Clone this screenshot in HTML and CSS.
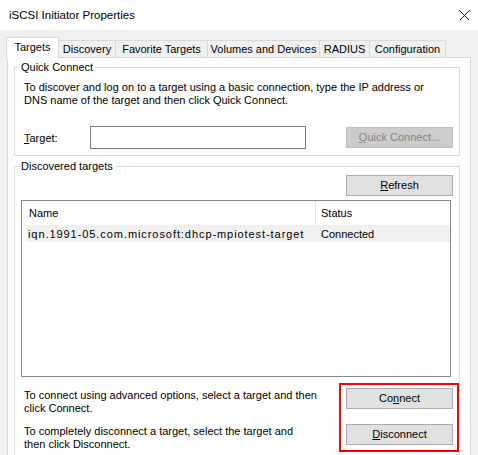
FILE: index.html
```html
<!DOCTYPE html>
<html lang="en">
<head>
<meta charset="utf-8">
<title>iSCSI Initiator Properties</title>
<link rel="stylesheet" href="styles.css">
</head>
<body>
<div class="titlebar">
  <span class="title">iSCSI Initiator Properties</span>
  <svg class="close" width="11" height="11" viewBox="0 0 11 11" shape-rendering="crispEdges"><path d="M0.5 0.5 L10.5 10.5 M10.5 0.5 L0.5 10.5" stroke="#1a1a1a" stroke-width="1" fill="none"/></svg>
</div>
<div class="main">
  <div class="tabs">
    <div class="tab active w-targets">Targets</div>
    <div class="tab w-discovery">Discovery</div>
    <div class="tab w-favorite">Favorite Targets</div>
    <div class="tab w-volumes">Volumes and Devices</div>
    <div class="tab w-radius">RADIUS</div>
    <div class="tab w-config">Configuration</div>
  </div>
  <div class="panel">
    <div class="group quick">
      <div class="legend">Quick Connect</div>
      <p class="para">To discover and log on to a target using a basic connection, type the IP address or<br>DNS name of the target and then click Quick Connect.</p>
      <div class="target-row">
        <label class="target-label"><u>T</u>arget:</label>
        <div class="input"></div>
        <button class="btn" disabled><u>Q</u>uick Connect...</button>
      </div>
    </div>
    <div class="group discovered">
      <div class="legend">Discovered targets</div>
      <button class="btn refresh"><u>R</u>efresh</button>
      <div class="list">
        <div class="list-header">
          <div class="col-name">Name</div>
          <div class="col-status">Status</div>
        </div>
        <div class="list-row">
          <div class="cell-name">iqn.1991-05.com.microsoft:dhcp-mpiotest-target</div>
          <div class="cell-status">Connected</div>
        </div>
      </div>
      <div class="actions">
        <div class="texts">
          <p class="para">To connect using advanced options, select a target and then<br>click Connect.</p>
          <p class="para second">To completely disconnect a target, select the target and<br>then click Disconnect.</p>
        </div>
        <div class="highlight">
          <button class="btn">Co<u>n</u>nect</button>
          <button class="btn"><u>D</u>isconnect</button>
        </div>
      </div>
    </div>
  </div>
</div>
</body>
</html>
```
FILE: styles.css
```css
* { box-sizing: border-box; }
html, body { margin: 0; padding: 0; }
body {
  width: 478px;
  height: 455px;
  overflow: hidden;
  background: #f0f0f0;
  font-family: "Liberation Sans", Arial, sans-serif;
  font-size: 11px;
  color: #000;
}
.titlebar {
  height: 30px;
  background: #fff;
  display: flex;
  align-items: center;
  justify-content: space-between;
  padding: 0 8px 0 9px;
}
.title { font-size: 11.5px; }
.close { display: block; }

.main { padding: 7px 8px 0 6px; }

.tabs {
  display: flex;
  align-items: flex-end;
  height: 20px;
  position: relative;
  z-index: 1;
}
.tab {
  height: 17px;
  border: 1px solid #d9d9d9;
  border-bottom: none;
  background: #f0f0f0;
  margin-left: -1px;
  display: flex;
  align-items: center;
  justify-content: center;
  white-space: nowrap;
}
.tab.active {
  height: 21px;
  background: #fff;
  margin-left: 0;
  margin-bottom: -1px;
  position: relative;
  z-index: 2;
  padding-bottom: 2px;
}
.w-targets { width: 53px; }
.w-discovery { width: 58px; }
.w-favorite { width: 93px; }
.w-volumes { width: 113px; }
.w-radius { width: 51px; }
.w-config { width: 77px; }

.panel {
  margin-left: 1px;
  width: 464px;
  height: 420px;
  background: #fff;
  border: 1px solid #d9d9d9;
  padding: 9px 0 0 6px;
}

.group {
  width: 446px;
  border: 1px solid #dcdcdc;
  display: flex;
  flex-direction: column;
}
.discovered { margin-top: 10px; height: 320px; }

.legend {
  align-self: flex-start;
  margin: -7px 0 0 5px;
  padding: 0 1px;
  line-height: 13px;
  background: #fff;
}
.para {
  margin: 0;
  line-height: 13px;
  white-space: nowrap;
}
.quick .para { margin: 7px 0 0 9px; }

.target-row {
  display: flex;
  align-items: center;
  height: 23px;
  margin: 19px 6px 6px 9px;
}
.target-label { width: 66px; }
.input {
  width: 216px;
  height: 23px;
  border: 1px solid #7a7a7a;
  background: #fff;
}
.target-row .btn { margin-left: auto; }

.btn {
  width: 107px;
  height: 21px;
  padding: 0;
  border: 1px solid #adadad;
  background: #e1e1e1;
  font: inherit;
  color: #000;
  text-align: center;
  line-height: 19px;
}
.btn:disabled {
  background: #cccccc;
  border-color: #bfbfbf;
  color: #838383;
}
.refresh {
  align-self: flex-end;
  margin: 2px 6px 0 0;
}

.list {
  margin: 4px 0 0 6px;
  width: 430px;
  height: 177px;
  border: 1px solid #828790;
  background: #fff;
}
.list-header {
  display: flex;
  height: 24px;
  align-items: center;
}
.col-name {
  width: 294px;
  height: 24px;
  line-height: 24px;
  padding-left: 7px;
  border-right: 1px solid #e5e5e5;
}
.col-status { padding-left: 5px; }
.list-row {
  display: flex;
  align-items: center;
  height: 17px;
  margin-left: 5px;
  background: #f0f0f0;
}
.cell-name {
  width: 289px;
  padding-left: 1px;
  white-space: nowrap;
  letter-spacing: 0.93px;
}
.cell-status { padding-left: 5px; }

.actions {
  display: flex;
  margin-top: 6px;
}
.texts { margin-left: 9px; padding-top: 6px; }
.texts .second { margin-top: 10px; }
.highlight {
  margin-left: auto;
  border: 2px solid #ff0000;
  padding: 3px 4px 5px 5px;
  display: flex;
  flex-direction: column;
  gap: 15px;
}
```
